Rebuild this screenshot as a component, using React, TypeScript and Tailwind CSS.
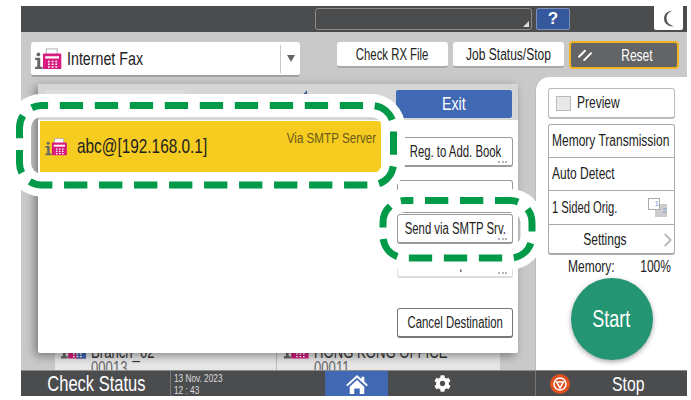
import { ChevronRight } from 'lucide-react'
import { FaCog } from 'react-icons/fa'

const narrowLeft = 'inline-block shrink-0 origin-left scale-x-[0.75] whitespace-nowrap'
const narrowCenter = 'inline-block shrink-0 origin-center scale-x-[0.75] whitespace-nowrap'
const narrowRight = 'inline-block shrink-0 origin-right scale-x-[0.75] whitespace-nowrap'
const tightCenter = 'inline-block shrink-0 origin-center scale-x-[0.71] whitespace-nowrap'

const FaxIcon = ({ className, blue }: { className?: string; blue?: boolean }) => (
  <svg viewBox="0 0 30 24" className={className}>
    <circle cx="4.500" cy="7" r="2" fill="#666" />
    <path d="M1 10.500h5.500v10H9V23H1v-2.500h2.300V13H1z" fill="#666" />
    <rect x="13" y="1" width="12" height="9" fill="#fff" stroke="#aaa" strokeWidth="1" />
    <rect x="9.500" y="6" width="20" height="17" rx="1" fill="#d81b7f" />
    <rect x="12" y="9" width="15" height="2.500" fill="#fff" />
    {blue && <rect x="19" y="8" width="11" height="15" fill="#4169b3" />}
    <path d="M15 14h2v1.500h-2zM19 14h2v1.500h-2zM23 14h2v1.500h-2zM15 17h2v1.500h-2zM19 17h2v1.500h-2zM23 17h2v1.500h-2zM15 20h2v1.500h-2zM19 20h2v1.500h-2zM23 20h2v1.500h-2z" fill="#fff" />
  </svg>
)

const MoreDots = () => (
  <div className="absolute bottom-[2px] right-[5px] flex gap-[1.500px]">
    <span className="size-[2px] bg-[#b5b5b5]" />
    <span className="size-[2px] bg-[#b5b5b5]" />
    <span className="size-[2px] bg-[#b5b5b5]" />
  </div>
)

const SideButton = ({ label, dots, className }: { label: string; dots?: boolean; className?: string }) => (
  <div
    className={`relative flex w-[116px] items-center justify-center rounded-[3px] border border-b-2 bg-white text-[16px] text-[#222] ${className ?? ''}`}
  >
    <span className={tightCenter}>{label}</span>
    {dots && <MoreDots />}
  </div>
)

const ToolButton = ({ label, textClass }: { label: string; textClass: string }) => (
  <div className="flex h-[26px] w-[111px] items-center justify-center rounded-[3px] border-b-2 border-[#a8a8a8] bg-white pt-[1px] text-[16px] text-[#222]">
    <span className={textClass}>{label}</span>
  </div>
)

const SettingRow = ({ children, className }: { children: React.ReactNode; className: string }) => (
  <div className={`relative flex items-center pl-[3px] text-[16px] text-[#222] ${className}`}>{children}</div>
)

export default function App() {
  return (
    <div
      className="relative h-[400px] w-[691px] overflow-hidden bg-white pb-[4px] pl-[21px] pr-[4px] pt-[6px]"
      style={{ fontFamily: '"Liberation Sans", sans-serif' }}
    >
      <div className="flex h-full flex-col bg-[#c9c9c9]">
        {/* status strip */}
        <div className="flex h-[26px] shrink-0 bg-[#4b4c4e]">
          <div className="relative ml-[294px] mt-[2px] h-[22px] w-[217px] rounded-[3px] border border-[#8a8a8a] bg-[#4b4c4e]">
            <div className="absolute bottom-[2px] right-[2px] h-0 w-0 border-b-[6px] border-l-[6px] border-b-[#ddd] border-l-transparent" />
          </div>
          <div className="ml-[4px] mt-[2px] flex h-[22px] w-[34px] items-center justify-center rounded-[2px] border border-[#7d8fb5] bg-[#36589c] text-[17px] font-bold text-white">
            ?
          </div>
          <div className="ml-[84px] flex h-[24px] w-[29px] items-center justify-center rounded-b-[2px] bg-white pl-[2px]">
            <svg viewBox="0 0 16 20" className="h-[17px] w-[14px]">
              <path d="M11 1C5 3 4 7 4 10c0 4 3 8 9 9-7 1-12-3-12-9C1 5 5 1 11 1z" fill="#555" />
            </svg>
          </div>
        </div>

        {/* toolbar */}
        <div className="flex h-[45px] shrink-0 items-start pl-[10px] pt-[10px]">
          <div className="flex h-[35px] w-[269px] items-center rounded-[3px] border-b-2 border-[#a0a0a0] bg-white">
            <FaxIcon className="ml-[3px] h-[22px] w-[28px]" />
            <span className="ml-[5px] flex-1 pt-[1px] text-[19px] text-[#222]">
              <span className={narrowLeft}>Internet Fax</span>
            </span>
            <div className="flex h-[28px] w-[20px] items-center justify-center border-l border-[#c8c8c8]">
              <div className="h-0 w-0 border-x-[4.500px] border-t-[7px] border-x-transparent border-t-[#666]" />
            </div>
          </div>
          <div className="ml-[37px] flex gap-[5px]">
            <ToolButton label="Check RX File" textClass={tightCenter} />
            <ToolButton label="Job Status/Stop" textClass={narrowCenter} />
          </div>
          <div className="ml-[5px] -mt-[1px] flex h-[28px] w-[110px] items-center rounded-[4px] border-2 border-[#f0b323] bg-[#636466] text-[16px] text-white">
            <svg viewBox="0 0 16 14" className="ml-[7px] h-[12px] w-[14px] shrink-0">
              <path d="M1 9l7-7M7 13l8-8" stroke="#fff" strokeWidth="2.200" strokeLinecap="round" />
            </svg>
            <span className="ml-[4px] flex flex-1 justify-center pt-[1px]">
              <span className={narrowCenter}>Reset</span>
            </span>
          </div>
        </div>

        <div className="flex min-h-0 flex-1">
          {/* destination list behind the dialog */}
          <div className="relative flex w-[514px] flex-col justify-end">
            <div className="ml-[34px] mr-[35px] flex h-[40px] overflow-hidden bg-[#e6e6e6] text-[17.500px] leading-[16px] text-[#333]">
              <div className="flex w-[222px] border-r border-[#b9b9b9] pl-[5px]">
                <FaxIcon blue className="mt-[8px] h-[22px] w-[26px]" />
                <div className="ml-[5px] mt-[14px]">
                  <span className={narrowLeft}>Branch_02</span>
                  <div className="text-[#666]">
                    <span className={narrowLeft}>00013</span>
                  </div>
                </div>
              </div>
              <div className="flex flex-1 pl-[6px]">
                <FaxIcon className="mt-[8px] h-[22px] w-[26px]" />
                <div className="ml-[5px] mt-[14px]">
                  <span className={narrowLeft}>HONG KONG OFFICE</span>
                  <div className="text-[#666]">
                    <span className={narrowLeft}>00011</span>
                  </div>
                </div>
              </div>
            </div>

            {/* dialog */}
            <div className="absolute left-[17px] top-[7px] flex h-[269px] w-[480px] flex-col rounded-[2px] bg-white shadow-[-3px_3px_10px_rgba(0,0,0,0.4)]">
              <div className="relative flex h-[36px] shrink-0 items-start justify-between bg-[#d6d6d6] pl-[8px] pr-[6px] pt-[6px]">
                <div className="h-[28px] w-[139px] rounded-[2px] bg-[#dedede]" />
                <div className="absolute left-[264px] top-[6px] h-0 w-0 border-b-[6px] border-l-[5px] border-b-[#36589c] border-l-transparent" />
                <div className="flex h-[28px] w-[116px] items-center justify-center rounded-[2px] bg-[#4169b3] text-[19px] text-white">
                  <span className={narrowCenter}>Exit</span>
                </div>
              </div>
              <div className="flex flex-1">
                <div className="flex-1 pl-[2px] pt-[1px]">
                  <div className="relative flex h-[51px] w-[341px] items-center bg-[#f5cc1f] pl-[4px] text-[#222]">
                    <FaxIcon className="h-[18px] w-[24px] shrink-0" />
                    <span className="ml-[9px] text-[20.500px]">
                      <span className={narrowLeft}>abc@[192.168.0.1]</span>
                    </span>
                    <span className="absolute right-[5px] top-[5px] text-[15.500px] text-[#6b5a1a]">
                      <span className={narrowRight}>Via SMTP Server</span>
                    </span>
                  </div>
                </div>
                <div className="mr-[5px] flex flex-col pt-[17px]">
                  <SideButton label="Reg. to Add. Book" dots className="h-[30px] border-[#9a9a9a]" />
                  <SideButton label="Edit Destination" dots className="mt-[13px] h-[33px] border-[#9a9a9a]" />
                  <SideButton label="Send via SMTP Srv." dots className="mt-[1px] h-[30px] border-[#9a9a9a]" />
                  <SideButton label="Send Options" dots className="mt-[6px] h-[28px] border-[#ddd]" />
                  <SideButton label="Cancel Destination" className="mt-[30px] h-[30px] border-[#777]" />
                </div>
              </div>
            </div>
          </div>

          {/* right panel */}
          <div className="flex w-[152px] flex-col items-center rounded-tl-[14px] border-l border-[#bdbdbd] bg-white pt-[11px]">
            <div className="flex h-[31px] w-[127px] items-center rounded-[3px] border border-b-2 border-[#bbb] pl-[7px] text-[16px] text-[#222]">
              <span className="size-[15px] shrink-0 border border-[#bbb] bg-[#e8e8e8]" />
              <span className="ml-[6px]">
                <span className={narrowLeft}>Preview</span>
              </span>
            </div>
            <div className="mt-[5px] flex h-[131px] w-[127px] flex-col rounded-[3px] border border-b-2 border-[#aaa]">
              <SettingRow className="h-[33px] shrink-0 border-b border-[#a9a9a9]">
                <span className={narrowLeft}>Memory Transmission</span>
              </SettingRow>
              <SettingRow className="h-[33px] shrink-0 border-b border-[#a9a9a9]">
                <span className={narrowLeft}>Auto Detect</span>
              </SettingRow>
              <SettingRow className="h-[34px] shrink-0 border-b border-[#a9a9a9]">
                <span className="inline-block shrink-0 origin-left scale-x-[0.7] whitespace-nowrap">1 Sided Orig.</span>
                <div className="absolute right-[7px] top-[13px] h-[13px] w-[12px] bg-[#ccc] text-right text-[8px] leading-[14px] text-[#7b9bd0]">2</div>
                <div className="absolute right-[14px] top-[7px] size-[12px] border border-[#aaa] bg-white text-right text-[8px] leading-[10px] text-[#7b9bd0]">1</div>
              </SettingRow>
              <SettingRow className="min-h-0 flex-1 pt-[2px]">
                <span className="flex w-full justify-center pr-[17px]">
                  <span className={narrowCenter}>Settings</span>
                </span>
                <ChevronRight className="absolute -right-[5px] size-[22px] text-[#b8b8b8]" strokeWidth={2} />
              </SettingRow>
            </div>
            <div className="ml-[14px] mt-[2px] flex w-[102px] justify-between text-[16px] leading-[20px] text-[#222]">
              <span className={narrowLeft}>Memory:</span>
              <span className={narrowRight}>100%</span>
            </div>
            <div className="mt-[1px] flex size-[82px] items-center justify-center rounded-full bg-[#239572] text-[24px] text-white shadow-[0_2px_5px_rgba(0,0,0,0.35)]">
              <span className={narrowCenter}>Start</span>
            </div>
          </div>
        </div>

        {/* bottom bar */}
        <div className="flex h-[26px] shrink-0 border-t border-[#8c8c8c] bg-[#4b4c4e] text-white">
          <div className="flex w-[150px] items-center justify-center border-r border-[#777] pl-[1px] text-[22px]">
            <span className={narrowCenter}>Check Status</span>
          </div>
          <div className="w-[154px] pl-[3px] pt-[1px] text-[11px] leading-[12px] text-[#ddd]">
            <span className={narrowLeft}>13 Nov. 2023</span>
            <div>
              <span className={narrowLeft}>12 : 43</span>
            </div>
          </div>
          <div className="flex w-[63px] items-center justify-center bg-[#4169b3]">
            <svg viewBox="0 0 26 22" className="h-[20px] w-[24px]">
              <path d="M13 1 1 12l1.500 1.500L13 4l10.500 9.500L25 12l-4-3.700V3h-3v2.600z" fill="#fff" />
              <path d="M5 14 13 6.500 21 14v8h-5v-6h-6v6H5z" fill="#fff" />
            </svg>
          </div>
          <div className="flex w-[148px] items-center border-r border-[#777] pl-[46px]">
            <FaCog className="size-[17px]" />
          </div>
          <div className="flex flex-1 items-center">
            <svg viewBox="0 0 20 20" className="ml-[14px] size-[20px] shrink-0">
              <circle cx="10" cy="10" r="10" fill="#e2501e" />
              <circle cx="10" cy="10" r="6" fill="none" stroke="#fff" strokeWidth="1.500" />
              <path d="M6.500 8h7L10 14z" fill="none" stroke="#fff" strokeWidth="1.500" />
            </svg>
            <span className="ml-[42px] text-[21px]">
              <span className={narrowLeft}>Stop</span>
            </span>
          </div>
        </div>
      </div>

      {/* callouts over the screen */}
      <svg className="pointer-events-none absolute left-0 top-0" width="691" height="400">
        <rect x="19.500" y="105.500" width="374" height="79.500" rx="22" fill="none" stroke="#fff" strokeWidth="23" />
        <rect x="383" y="200.500" width="149" height="57.500" rx="22" fill="none" stroke="#fff" strokeWidth="23" />
        <rect x="19.500" y="105.500" width="374" height="79.500" rx="22" fill="none" stroke="#009a49" strokeWidth="7" strokeDasharray="23.300 11.700" strokeDashoffset="-18.300" />
        <rect x="383" y="200.500" width="149" height="57.500" rx="22" fill="none" stroke="#009a49" strokeWidth="7" strokeDasharray="23.300 11.700" strokeDashoffset="-20" />
      </svg>
    </div>
  )
}
